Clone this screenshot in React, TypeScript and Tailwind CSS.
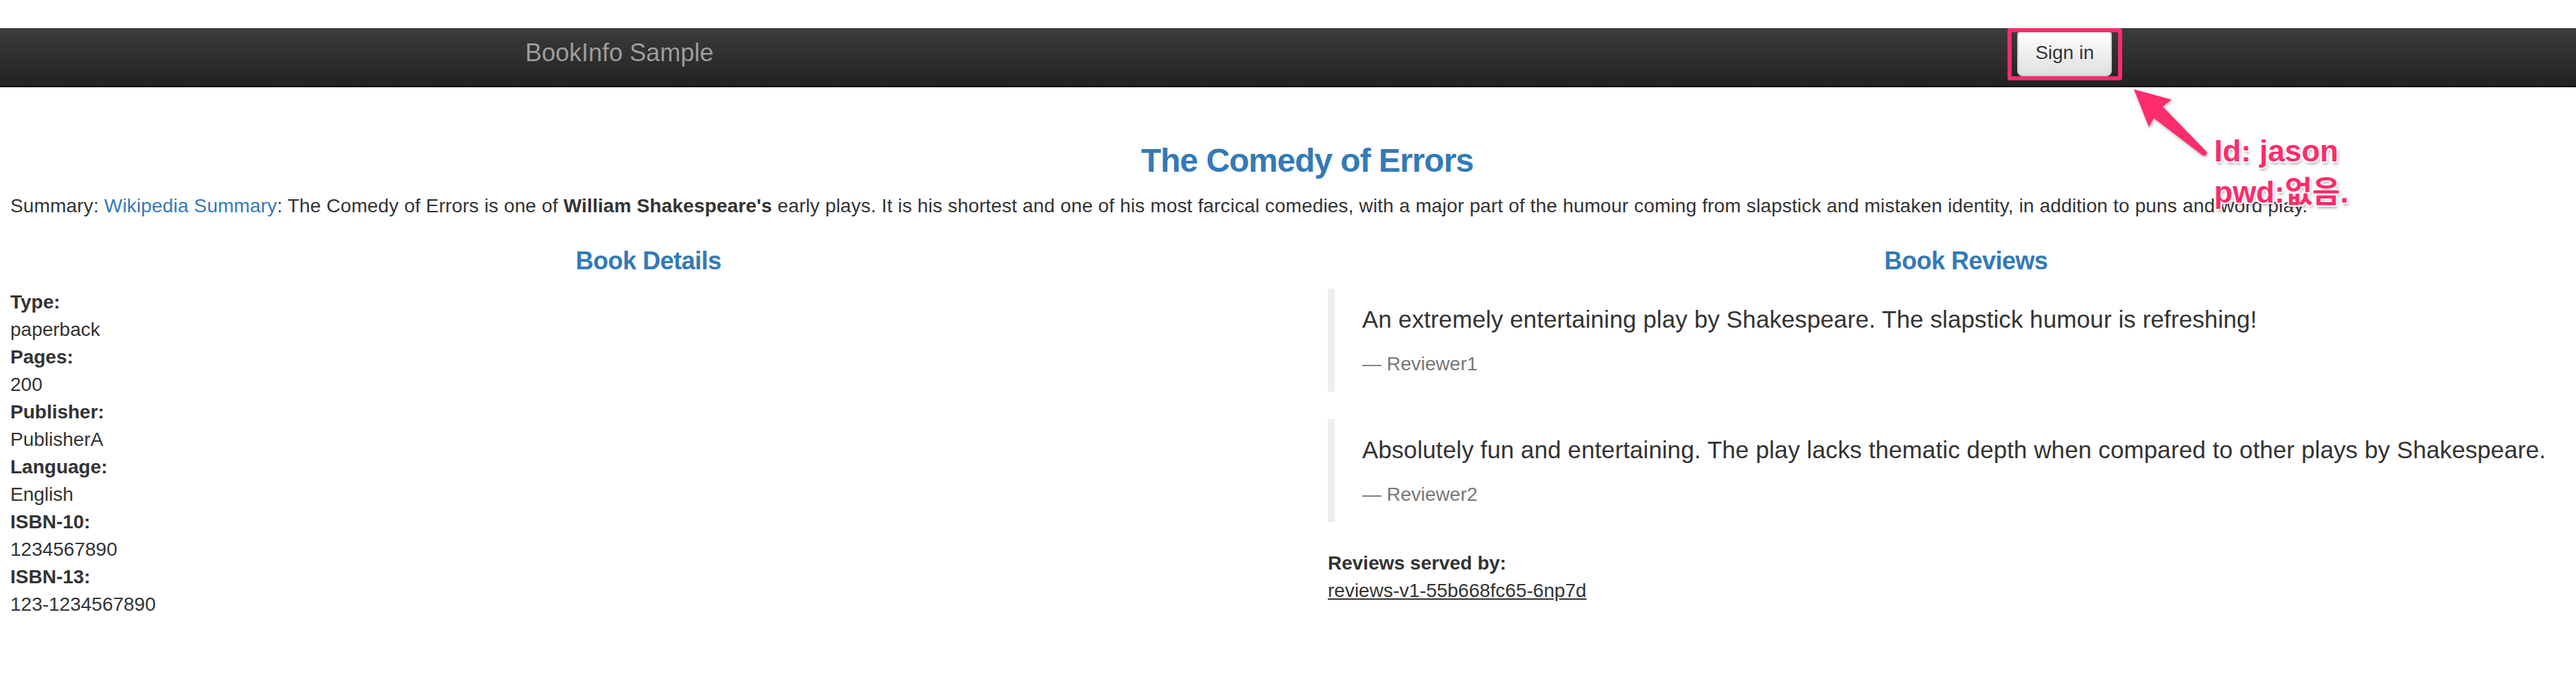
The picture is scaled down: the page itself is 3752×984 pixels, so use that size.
import React from "react";

const details: [string, string][] = [
    ["Type:", "paperback"],
    ["Pages:", "200"],
    ["Publisher:", "PublisherA"],
    ["Language:", "English"],
    ["ISBN-10:", "1234567890"],
    ["ISBN-13:", "123-1234567890"],
];

const reviews = [
    {
        text: "An extremely entertaining play by Shakespeare. The slapstick humour is refreshing!",
        by: "Reviewer1",
    },
    {
        text: "Absolutely fun and entertaining. The play lacks thematic depth when compared to other plays by Shakespeare.",
        by: "Reviewer2",
    },
];

const Navbar = () => (
    <nav className="h-[86px] border-b-2 border-[#080808] bg-linear-to-b from-[#3c3c3c] to-[#222222]">
        <div className="ml-[735px] w-[2341px] pl-[30px] flex justify-between items-start">
            <a
                href="#"
                className="pt-[16px] text-[36px] leading-[40px] text-[#9d9d9d] [text-shadow:0_-1px_0_rgba(0,0,0,0.25)]"
            >
                BookInfo Sample
            </a>
            <button
                type="button"
                className="mt-[2px] h-[68px] px-[24px] rounded-[8px] border-2 border-[#cccccc] bg-linear-to-b from-white to-[#e0e0e0] text-[28px] leading-[40px] text-[#333] [text-shadow:0_1px_0_#fff] shadow-[inset_0_1px_0_rgba(255,255,255,0.15),0_1px_1px_rgba(0,0,0,0.075)]"
            >
                Sign in
            </button>
        </div>
    </nav>
);

const BookDetails = () => (
    <div className="px-[30px]">
        <h4 className="mt-[20px] mb-[20px] text-center text-[36px] leading-[40px] font-bold tracking-[-0.5px] text-[#337ab7]">
            Book Details
        </h4>
        <dl className="text-[28px] leading-[40px]">
            {details.map(([label, value]) => (
                <div key={label}>
                    <dt className="font-bold">{label}</dt>
                    <dd>{value}</dd>
                </div>
            ))}
        </dl>
    </div>
);

const BookReviews = () => (
    <div className="px-[30px]">
        <h4 className="mt-[20px] mb-[20px] text-center text-[36px] leading-[40px] font-bold tracking-[-0.5px] text-[#337ab7]">
            Book Reviews
        </h4>
        {reviews.map((r) => (
            <blockquote
                key={r.by}
                className="mb-[40px] border-l-[10px] border-[#eeeeee] px-[40px] py-[20px]"
            >
                <p className="mb-[20px] text-[35px] leading-[50px] tracking-[0.1px]">{r.text}</p>
                <small className="block text-[28px] leading-[40px] text-[#777777]">
                    {"\u2014\u00a0"}
                    {r.by}
                </small>
            </blockquote>
        ))}
        <dl className="text-[28px] leading-[40px]">
            <dt className="font-bold">Reviews served by:</dt>
            <dd>
                <u>reviews-v1-55b668fc65-6np7d</u>
            </dd>
        </dl>
    </div>
);

// annotation drawn over the screenshot
const Annotation = () => (
    <>
        <div className="absolute left-[2924px] top-[41px] w-[167px] h-[76px] rounded-[4px] border-[6px] border-[#fd2c6c]" />
        <svg
            className="absolute left-[3100px] top-[125px] [filter:drop-shadow(1px_2px_2px_rgba(0,0,0,0.3))]"
            width="122"
            height="110"
            viewBox="0 0 122 110"
        >
            <polygon
                points="8,5 63,20 50,30 115,97 112,102 108,101 37,47 30,60"
                fill="#fd2c6c"
                strokeLinejoin="round"
            />
        </svg>
        <div className="absolute left-[3225px] top-[190px] text-[44px] leading-[60px] font-bold text-[#fd2c6c] font-['Liberation_Sans','Noto_Sans_CJK_KR',sans-serif] [text-shadow:2px_0_0_#fff,-2px_0_0_#fff,0_2px_0_#fff,0_-2px_0_#fff,2px_2px_0_#fff,-2px_-2px_0_#fff,2px_-2px_0_#fff,-2px_2px_0_#fff,2px_4px_4px_rgba(0,0,0,0.35)]">
            <div>Id: jason</div>
            <div>pwd:없음.</div>
        </div>
    </>
);

export default function App() {
    return (
        <div className="relative w-[3752px] h-[984px] overflow-hidden bg-white text-[#333333] font-['Liberation_Sans',Arial,sans-serif]">
            <div className="h-[41px]" />
            <Navbar />
            <main className="-ml-[15px] w-[3838px] pt-[40px]">
                <div className="px-[30px]">
                    <h3 className="mt-[40px] mb-[20px] text-center text-[48px] leading-[53px] font-bold tracking-[-1px] text-[#337ab7]">
                        The Comedy of Errors
                    </h3>
                    <p className="mb-[20px] text-[28px] leading-[40px] tracking-[0.16px]">
                        Summary:{" "}
                        <a href="#" className="text-[#337ab7]">
                            Wikipedia Summary
                        </a>
                        : The Comedy of Errors is one of <b>William Shakespeare's</b> early plays. It is his
                        shortest and one of his most farcical comedies, with a major part of the humour coming
                        from slapstick and mistaken identity, in addition to puns and word play.
                    </p>
                </div>
                <div className="grid grid-cols-2">
                    <BookDetails />
                    <BookReviews />
                </div>
            </main>
            <Annotation />
        </div>
    );
}
